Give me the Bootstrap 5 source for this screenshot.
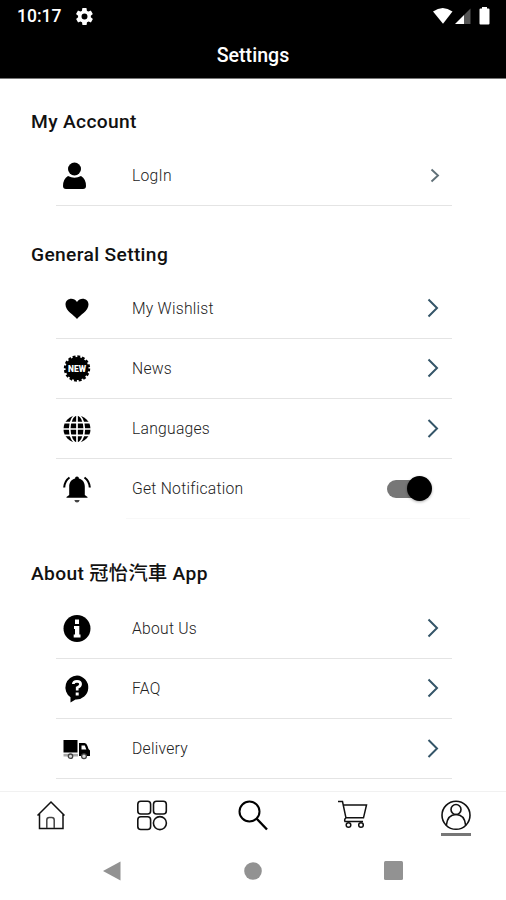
<!DOCTYPE html>
<html lang="en">
<head>
<meta charset="utf-8">
<meta name="viewport" content="width=device-width, initial-scale=1">
<title>Settings</title>
<link href="https://cdn.jsdelivr.net/npm/bootstrap@5.3.0/dist/css/bootstrap.min.css" rel="stylesheet">
<style>
body{font-family:Roboto,"Noto Sans CJK TC",sans-serif;height:900px;overflow:hidden;color:#111}
svg{display:block;flex:none}
.app-head{height:79px;border-bottom:1px solid #777}
.status{height:32px;padding:0 16px 0 17px;font-size:17.5px;font-weight:500}
.status .clock{width:59px}
.title{height:46px;padding-top:2px;font-size:19.6px;font-weight:500}
.sect{padding:0 54px 0 31px}
.sect h2{height:48px;margin:0;font-size:19.200px;font-weight:500;letter-spacing:.35px}
.s1{margin-top:19px}.s2{margin-top:25px}.s3{margin-top:30px}
.s3 h2{height:50px}
.item{height:60px;margin-left:25px;border-bottom:1px solid #e4e4e4;font-size:15.7px;line-height:24px;letter-spacing:.25px;font-weight:300;color:#222}
.item .ico{width:76px;padding-left:7px}
.item.toggle .ico+span{padding-top:1px}
.item.s-login .ico{padding-left:6px}
.item .go{width:12px;margin-right:13px;margin-bottom:1px}
.item.s-login .go{margin-right:11px}
.item.toggle{border-color:transparent}
.faint{height:1px;margin:-1px 36px 0 126px;background:#f8f8f8}
.switch-track{width:43px;height:18px;border-radius:9px;background:#777;margin-right:22px}
.switch-knob{width:25px;height:25px;border-radius:50%;background:#000;margin-right:-2px;box-shadow:0 1px 3px #0005}
.tabs{margin-top:12px;height:54px;border-top:1px solid #f1f1f1}
.tabs>div{width:101.2px;padding-top:8px}
.tabs>div:last-child{padding-left:2px}
.tabs .under{width:30px;height:3px;background:#777;margin-top:2px}
.sys{height:51px;padding:0 103px 0 102px}
</style>
</head>
<body class="bg-white d-flex flex-column">
<header class="app-head bg-black text-white flex-shrink-0">
  <div class="status d-flex align-items-center">
    <span class="clock">10:17</span>
    <svg width="17" height="17" viewBox="2 2 20 20" fill="#fff"><path d="M19.400 13a7.500 7.500 0 0 0 0-2l2.100-1.600a.5.5 0 0 0 .1-.6l-2-3.500a.5.5 0 0 0-.6-.2l-2.500 1a7.300 7.300 0 0 0-1.700-1L14.400 2.400a.5.5 0 0 0-.5-.4h-4a.5.5 0 0 0-.5.4L9 5.100a7.300 7.300 0 0 0-1.700 1l-2.500-1a.5.5 0 0 0-.6.2l-2 3.500a.5.5 0 0 0 .1.600L4.500 11a7.500 7.500 0 0 0 0 2l-2.100 1.600a.5.5 0 0 0-.1.600l2 3.500c.1.200.4.300.6.200l2.500-1a7.300 7.300 0 0 0 1.700 1l.4 2.700c0 .2.200.4.500.4h4c.3 0 .5-.2.5-.4l.4-2.700a7.300 7.300 0 0 0 1.700-1l2.500 1c.2.100.5 0 .6-.2l2-3.500a.5.5 0 0 0-.1-.6zM12 15.500a3.500 3.500 0 1 1 0-7 3.500 3.500 0 0 1 0 7z"/></svg>
    <svg class="ms-auto" width="57" height="20" viewBox="433 5 57 20"><path d="M433 10.500q9.800-7 19.500 0L443 22.800z" fill="#fff"/><path d="M464 14 470.500 7.500V23H464z" fill="#555"/><path d="M455 23l9-9V23z" fill="#fff"/><path d="M480.500 7.500h1.500V6h5v1.500h1.500q1 0 1 1V22.500q0 1-1 1h-8q-1 0-1-1V8.500q0-1 1-1z" fill="#fff"/></svg>
  </div>
  <h1 class="title d-flex align-items-center justify-content-center m-0">Settings</h1>
</header>

<section class="sect s1">
  <h2 class="d-flex align-items-center">My Account</h2>
  <div class="item s-login d-flex align-items-center">
    <span class="ico"><svg width="26" height="28" viewBox="0 0 26 28"><circle cx="12.500" cy="7" r="6.500"/><path d="M6 14q6.500 3.500 13 0Q24 17 24 24q0 3-3 3H4q-3 0-3-3Q1 17 6 14z"/></svg></span>
    <span>LogIn</span>
    <svg class="go ms-auto" width="12" height="16" viewBox="0 0 12 16" fill="none" stroke="#607078" stroke-width="1.900"><path d="M2.500 2.500 9 8.500 2.500 14.500"/></svg>
  </div>
</section>

<section class="sect s2">
  <h2 class="d-flex align-items-center">General Setting</h2>
  <div class="item d-flex align-items-center">
    <span class="ico"><svg width="28" height="28" viewBox="0 0 28 28"><path d="M14 24C11 20 2.500 16 2.500 9.500 2.500 3.500 10.500 1.500 14 7 17.500 1.500 25.500 3.500 25.500 9.500c0 6.500-8.500 10.500-11.500 14.500z"/></svg></span>
    <span>My Wishlist</span>
    <svg class="go ms-auto" width="12" height="20" viewBox="0 0 12 20" fill="none" stroke="#345568" stroke-width="2"><path d="M1.500 1.500 10 10 1.500 18.500"/></svg>
  </div>
  <div class="item d-flex align-items-center">
    <span class="ico"><svg width="28" height="28" viewBox="0 0 28 28"><circle cx="14" cy="13.500" r="11.500"/><circle cx="14" cy="13.500" r="11.700" fill="none" stroke="#000" stroke-width="3" stroke-dasharray="2.800 1.794"/><text x="14" y="16.700" font-size="8.500" font-weight="900" fill="#fff" text-anchor="middle" textLength="18" lengthAdjust="spacingAndGlyphs" letter-spacing="0">NEW</text></svg></span>
    <span>News</span>
    <svg class="go ms-auto" width="12" height="20" viewBox="0 0 12 20" fill="none" stroke="#345568" stroke-width="2"><path d="M1.500 1.500 10 10 1.500 18.500"/></svg>
  </div>
  <div class="item d-flex align-items-center">
    <span class="ico"><svg width="28" height="28" viewBox="0 0 28 28"><circle cx="14" cy="14" r="13.500"/><g fill="none" stroke="#fff" stroke-width="1.700"><path d="M14 0v28M0 14h28M1.500 7.700h25M1.500 20.300h25"/><ellipse cx="14" cy="14" rx="7.300" ry="14"/></g></svg></span>
    <span>Languages</span>
    <svg class="go ms-auto" width="12" height="20" viewBox="0 0 12 20" fill="none" stroke="#345568" stroke-width="2"><path d="M1.500 2 10 10.500 1.500 19"/></svg>
  </div>
  <div class="item toggle d-flex align-items-center">
    <span class="ico"><svg width="28" height="28" viewBox="0 0 28 28"><path d="M14 1.500c1.300 0 1.900.8 1.900 2C20 4.500 21.800 8 21.800 11.500V20l2.700 2v.8h-21V22l2.700-2v-8.500c0-3.500 1.800-7 5.900-8 0-1.200.6-2 1.900-2z"/><path d="M11.300 25h5.400q-.7 2.500-2.700 2.500T11.300 25z" fill="#444"/><path d="M1.200 12.500Q1.600 6 6.500 2.500M26.800 12.500Q26.400 6 21.500 2.500" fill="none" stroke="#000" stroke-width="2.100"/></svg></span>
    <span>Get Notification</span>
    <div class="switch-track ms-auto d-flex align-items-center justify-content-end"><div class="switch-knob"></div></div>
  </div>
</section>
<div class="faint flex-shrink-0"></div>

<section class="sect s3">
  <h2 class="d-flex align-items-center"><span>About 冠怡汽車 App</span></h2>
  <div class="item d-flex align-items-center">
    <span class="ico"><svg width="28" height="28" viewBox="0 0 28 28"><circle cx="14" cy="13.500" r="13.500"/><path d="M12 4.500h4V9h-4zM11 11h5.300v8.500h1.200v3h-6.800v-3H12V14h-1z" fill="#fff"/></svg></span>
    <span>About Us</span>
    <svg class="go ms-auto" width="12" height="20" viewBox="0 0 12 20" fill="none" stroke="#345568" stroke-width="2"><path d="M1.500 1.500 10 10 1.500 18.500"/></svg>
  </div>
  <div class="item d-flex align-items-center">
    <span class="ico"><svg width="28" height="28" viewBox="0 0 28 28"><path d="M14 .5a12 12 0 1 1-1.500 24L7.500 27.500V22.300A12 12 0 0 1 14 .5z"/><path d="M10.300 9Q10.500 6.300 14 6.300t3.600 2.800Q17.600 11.500 14.200 12.700V15.500" fill="none" stroke="#fff" stroke-width="2.700"/><path d="M12.700 17.500h3v3h-3z" fill="#fff"/></svg></span>
    <span>FAQ</span>
    <svg class="go ms-auto" width="12" height="20" viewBox="0 0 12 20" fill="none" stroke="#345568" stroke-width="2"><path d="M1.500 1.500 10 10 1.500 18.500"/></svg>
  </div>
  <div class="item d-flex align-items-center">
    <span class="ico"><svg width="28" height="28" viewBox="0 0 28 28"><path d="M.5 5h14v12.500H.5zM16 8h5.500q2 0 3 3l1 3 1.500 1.500v5.500H16z"/><path d="M18.500 10.500h3.300l1.500 4h-4.800z" fill="#fff"/><path d="M.5 18.800H15v2.700H.5z" fill="#aaa"/><g fill="#ddd" stroke="#444" stroke-width="1.300"><circle cx="7.500" cy="21.200" r="2.200"/><circle cx="21" cy="21.200" r="2.400"/></g></svg></span>
    <span>Delivery</span>
    <svg class="go ms-auto" width="12" height="20" viewBox="0 0 12 20" fill="none" stroke="#345568" stroke-width="2"><path d="M1.500 2 10 10.500 1.500 19"/></svg>
  </div>
</section>

<nav class="tabs d-flex flex-shrink-0">
  <div class="d-flex flex-column align-items-center"><svg width="30" height="32" viewBox="0 0 30 32" fill="none" stroke="#111" stroke-width="1.500"><path d="M1.500 15.500 15 2 28.500 15.500M3.500 14v14.500H27V14"/><path d="M10.800 28V20q0-2.500 2.500-2.500h2.400q2.500 0 2.500 2.500v8" stroke="#444"/></svg></div>
  <div class="d-flex flex-column align-items-center"><svg width="32" height="32" viewBox="0 0 32 32" fill="none" stroke="#111" stroke-width="1.600"><rect x="1.800" y="1.200" width="12.800" height="12.800" rx="3"/><rect x="17.500" y="1.200" width="12.800" height="12.800" rx="3"/><rect x="1.800" y="16.700" width="12.800" height="12.800" rx="3"/><circle cx="23.900" cy="23.100" r="6.500"/></svg></div>
  <div class="d-flex flex-column align-items-center"><svg width="32" height="32" viewBox="0 0 32 32" fill="none" stroke="#000"><circle cx="12.500" cy="11.500" r="10" stroke-width="2"/><path d="M19.500 18.500 30 29.500" stroke-width="2.400"/></svg></div>
  <div class="d-flex flex-column align-items-center"><svg width="32" height="32" viewBox="2 0 32 32" fill="none" stroke="#111" stroke-width="1.500"><path d="M1 1.500h5.500L10 18.200M7.500 5h23L27.500 17.800H10Q8 19 9 21.500h18"/><circle cx="12.500" cy="25" r="2.300"/><circle cx="25" cy="25" r="2.300"/></svg></div>
  <div class="d-flex flex-column align-items-center"><svg width="32" height="31" viewBox="0 0 32 31" fill="none" stroke="#111" stroke-width="1.600"><circle cx="16" cy="15.300" r="14"/><circle cx="16" cy="9.500" r="5"/><path d="M6.300 25.300Q7.500 14.500 16 14.500t9.700 10.800"/></svg><div class="under"></div></div>
</nav>
<div class="sys d-flex align-items-center justify-content-between flex-shrink-0">
  <svg width="19" height="20" viewBox="0 0 19 20" fill="#929292"><path d="M1 10 18.500.5v19z"/></svg>
  <svg width="18" height="18" viewBox="0 0 18 18" fill="#929292"><circle cx="9" cy="9" r="8.800"/></svg>
  <svg width="19" height="19" viewBox="0 0 19 19" fill="#929292"><rect width="19" height="19" rx="1.500"/></svg>
</div>
<script src="https://cdn.jsdelivr.net/npm/bootstrap@5.3.0/dist/js/bootstrap.bundle.min.js"></script>
</body>
</html>
